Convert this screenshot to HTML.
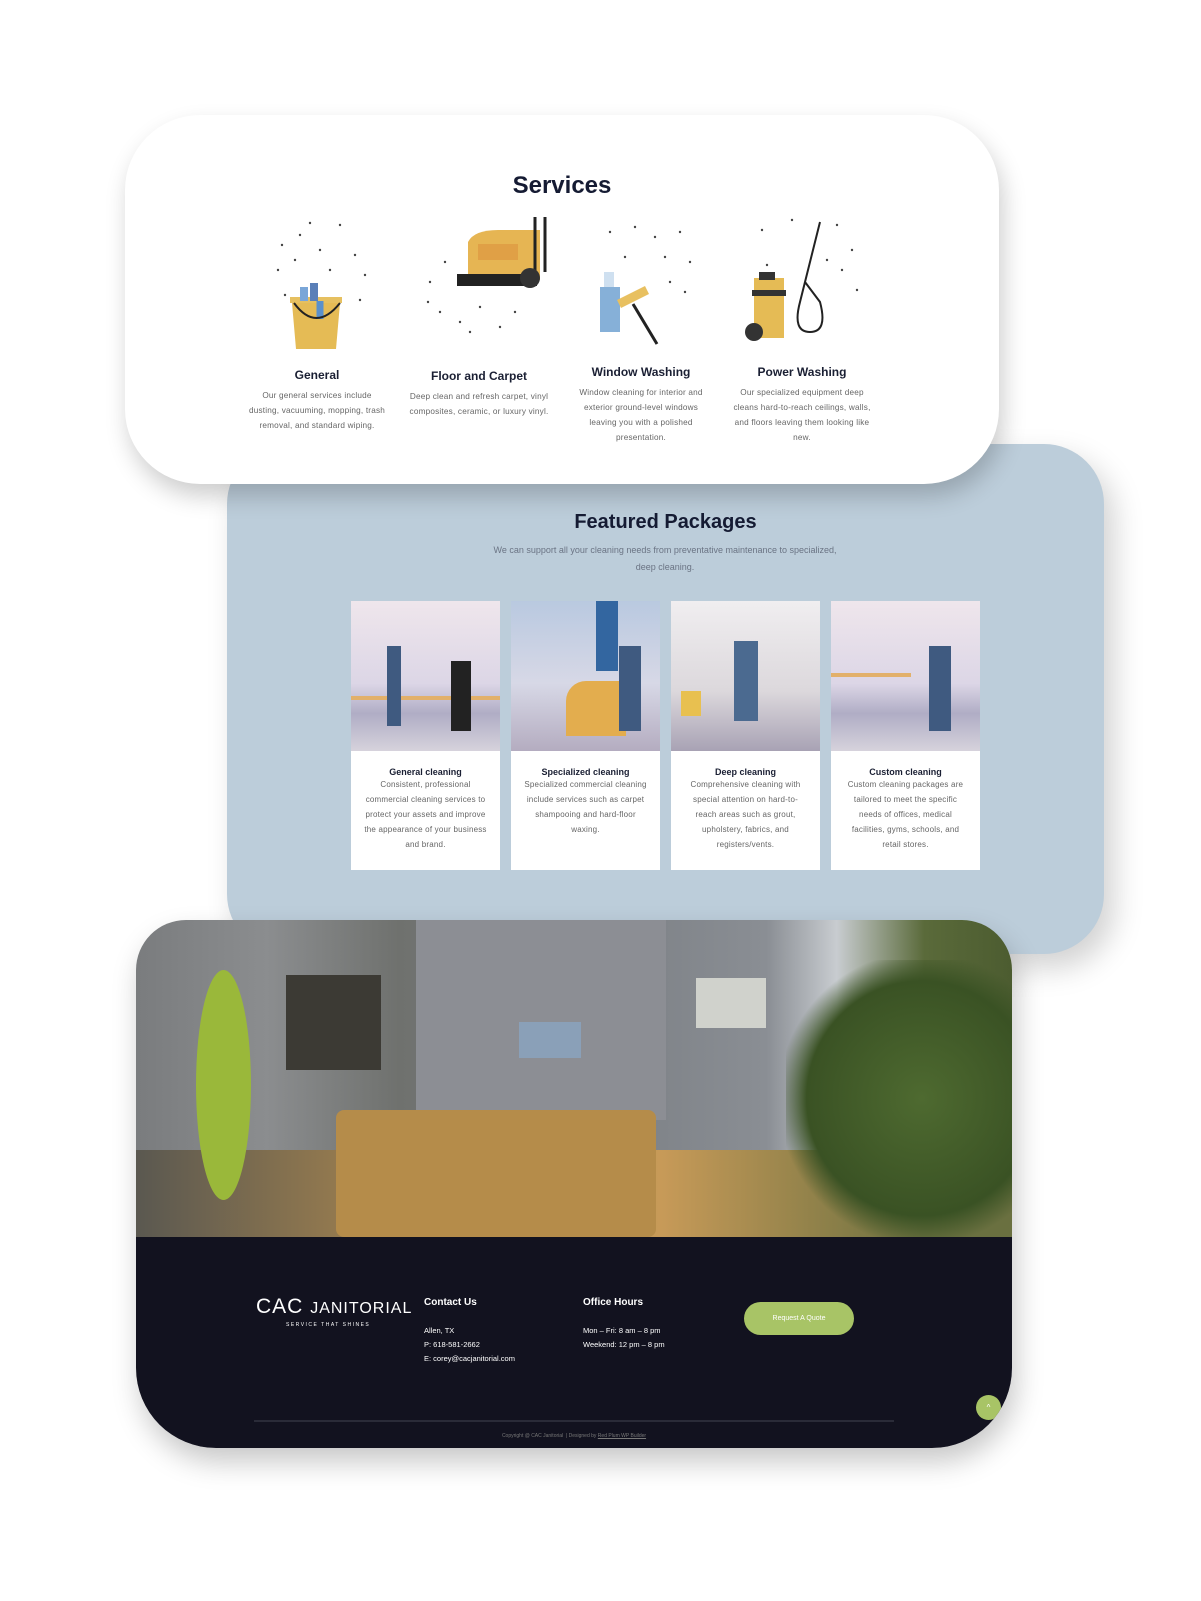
<!DOCTYPE html>
<html><head><meta charset="utf-8"><style>
*{margin:0;padding:0;box-sizing:border-box}
body{width:1201px;height:1601px;background:#fff;position:relative;overflow:hidden;font-family:"Liberation Sans",sans-serif;color:#1a1f33}
.abs{position:absolute}
.blue{left:227px;top:444px;width:877px;height:510px;background:#bccdda;border-radius:60px;box-shadow:10px 14px 30px rgba(0,0,0,.18)}
.white{left:125px;top:115px;width:874px;height:369px;background:#fff;border-radius:75px;box-shadow:4px 12px 24px rgba(0,0,0,.2)}
h2{font-weight:bold;text-align:center;color:#151b33}
.svc{position:absolute;width:140px;text-align:center}
.svc h4{font-size:12px;font-weight:bold;margin-bottom:6px}
.svc p{font-size:8.2px;line-height:15px;color:#666;letter-spacing:.2px}
.pk{position:absolute;top:601px;width:149px;height:269px;background:#fff}
.pk .im{height:150px;background:linear-gradient(#efe6ec 0%,#dcd6e6 55%,#b0adc5 75%,#d6d2dc 100%);position:relative;overflow:hidden}
.pk h5{font-size:9px;font-weight:bold;text-align:center;margin-top:16px}
.pk p{font-size:8px;line-height:15px;color:#666;text-align:center;padding:0 13px;letter-spacing:.2px}
.photo{left:136px;top:920px;width:876px;height:528px;border-radius:50px 50px 80px 80px;overflow:hidden;box-shadow:4px 14px 28px rgba(0,0,0,.22)}
.foot{position:absolute;left:0;top:317px;width:100%;height:211px;background:#12121f;color:#fff}
</style></head><body>
<div class="abs blue"></div>
<div class="abs white"></div>
<h2 class="abs" style="left:125px;width:874px;top:172px;font-size:24px">Services</h2>

<svg class="abs" style="left:270px;top:215px" width="110" height="135">
<g fill="#444"><circle cx="12" cy="30" r="1.2"/><circle cx="30" cy="20" r="1.2"/><circle cx="50" cy="35" r="1.2"/><circle cx="70" cy="10" r="1.2"/><circle cx="85" cy="40" r="1.2"/><circle cx="95" cy="60" r="1.2"/><circle cx="8" cy="55" r="1.2"/><circle cx="25" cy="45" r="1.2"/><circle cx="60" cy="55" r="1.2"/><circle cx="90" cy="85" r="1.2"/><circle cx="15" cy="80" r="1.2"/><circle cx="40" cy="8" r="1.2"/></g>
<rect x="20" y="82" width="52" height="6" fill="#e6c060"/><path d="M22 88h48l-4 46H26z" fill="#e5bb55"/>
<rect x="30" y="72" width="8" height="14" fill="#7aa6d8"/><rect x="40" y="68" width="8" height="18" fill="#5a7fb8"/><path d="M50 86v18" stroke="#5a90cc" stroke-width="7"/>
<path d="M24 88q22 30 46 0" fill="none" stroke="#222" stroke-width="2"/></svg>

<svg class="abs" style="left:420px;top:212px" width="135" height="130">
<g fill="#444"><circle cx="10" cy="70" r="1.2"/><circle cx="25" cy="50" r="1.2"/><circle cx="20" cy="100" r="1.2"/><circle cx="40" cy="110" r="1.2"/><circle cx="60" cy="95" r="1.2"/><circle cx="80" cy="115" r="1.2"/><circle cx="95" cy="100" r="1.2"/><circle cx="8" cy="90" r="1.2"/><circle cx="50" cy="120" r="1.2"/></g>
<path d="M48 30q6-12 30-12h42v50H48z" fill="#e6b553"/><rect x="58" y="32" width="40" height="16" fill="#e0a046"/>
<path d="M115 5v60M125 5v55" stroke="#222" stroke-width="3"/><rect x="37" y="62" width="80" height="12" fill="#222"/><circle cx="110" cy="66" r="10" fill="#333"/></svg>

<svg class="abs" style="left:595px;top:212px" width="110" height="135">
<g fill="#444"><circle cx="15" cy="20" r="1.2"/><circle cx="40" cy="15" r="1.2"/><circle cx="60" cy="25" r="1.2"/><circle cx="85" cy="20" r="1.2"/><circle cx="95" cy="50" r="1.2"/><circle cx="70" cy="45" r="1.2"/><circle cx="30" cy="45" r="1.2"/><circle cx="90" cy="80" r="1.2"/><circle cx="75" cy="70" r="1.2"/></g>
<rect x="5" y="75" width="20" height="45" fill="#86b0d8"/><rect x="9" y="60" width="10" height="15" fill="#cfe0f0"/>
<path d="M22 88l28-14 4 8-28 14z" fill="#e8c060"/><path d="M38 92l24 40" stroke="#222" stroke-width="3"/></svg>

<svg class="abs" style="left:742px;top:210px" width="125" height="135">
<g fill="#444"><circle cx="20" cy="20" r="1.2"/><circle cx="50" cy="10" r="1.2"/><circle cx="95" cy="15" r="1.2"/><circle cx="110" cy="40" r="1.2"/><circle cx="100" cy="60" r="1.2"/><circle cx="25" cy="55" r="1.2"/><circle cx="115" cy="80" r="1.2"/><circle cx="85" cy="50" r="1.2"/></g>
<path d="M78 12l-20 80q-8 30 10 30t10-30l-15-20" fill="none" stroke="#222" stroke-width="2"/>
<rect x="12" y="68" width="30" height="60" fill="#e5bb55"/><rect x="10" y="80" width="34" height="6" fill="#333"/><rect x="17" y="62" width="16" height="8" fill="#333"/><circle cx="12" cy="122" r="9" fill="#333"/></svg>

<div class="svc" style="left:247px;top:368px"><h4>General</h4><p>Our general services include dusting, vacuuming, mopping, trash removal, and standard wiping.</p></div>
<div class="svc" style="left:406px;top:369px;width:146px"><h4>Floor and Carpet</h4><p>Deep clean and refresh carpet, vinyl composites, ceramic, or luxury vinyl.</p></div>
<div class="svc" style="left:571px;top:365px"><h4>Window Washing</h4><p>Window cleaning for interior and exterior ground-level windows leaving you with a polished presentation.</p></div>
<div class="svc" style="left:732px;top:365px"><h4>Power Washing</h4><p>Our specialized equipment deep cleans hard-to-reach ceilings, walls, and floors leaving them looking like new.</p></div>

<h2 class="abs" style="left:227px;width:877px;top:511px;font-size:20px">Featured Packages</h2>
<p class="abs" style="left:485px;width:360px;top:542px;font-size:9px;line-height:17px;color:#6b7484;text-align:center">We can support all your cleaning needs from preventative maintenance to specialized, deep cleaning.</p>

<div class="pk" style="left:351px"><div class="im"><div class="abs" style="left:0;top:95px;width:149px;height:4px;background:#e2b06a"></div><div class="abs" style="left:36px;top:45px;width:14px;height:80px;background:#3f5a80"></div><div class="abs" style="left:100px;top:60px;width:20px;height:70px;background:#222"></div></div><h5>General cleaning</h5><p>Consistent, professional commercial cleaning services to protect your assets and improve the appearance of your business and brand.</p></div>
<div class="pk" style="left:511px"><div class="im" style="background:linear-gradient(#b9c9e0,#d7d8e6 55%,#b4acc0)"><div class="abs" style="left:85px;top:0;width:22px;height:70px;background:#3366a0"></div><div class="abs" style="left:55px;top:80px;width:60px;height:55px;background:#e3ad4e;border-radius:20px 4px 0 0"></div><div class="abs" style="left:108px;top:45px;width:22px;height:85px;background:#3f5a80"></div></div><h5>Specialized cleaning</h5><p>Specialized commercial cleaning include services such as carpet shampooing and hard-floor waxing.</p></div>
<div class="pk" style="left:671px"><div class="im" style="background:linear-gradient(#f0eef0,#dcd8dc 60%,#a8a2b4)"><div class="abs" style="left:63px;top:40px;width:24px;height:80px;background:#4b6a90"></div><div class="abs" style="left:10px;top:90px;width:20px;height:25px;background:#e8c050"></div></div><h5>Deep cleaning</h5><p>Comprehensive cleaning with special attention on hard-to-reach areas such as grout, upholstery, fabrics, and registers/vents.</p></div>
<div class="pk" style="left:831px"><div class="im"><div class="abs" style="left:0;top:72px;width:80px;height:4px;background:#e2b06a"></div><div class="abs" style="left:98px;top:45px;width:22px;height:85px;background:#3f5a80"></div></div><h5>Custom cleaning</h5><p>Custom cleaning packages are tailored to meet the specific needs of offices, medical facilities, gyms, schools, and retail stores.</p></div>

<div class="abs photo">
<div class="abs" style="left:0;top:0;width:876px;height:317px;background:linear-gradient(90deg,#7a7c7e 0%,#8b8d8f 15%,#6f716e 30%,#7d8186 55%,#8a8e94 72%,#c8ccd0 80%,#5a6a3a 90%,#4c5c30 100%)"></div>
<div class="abs" style="left:280px;top:0;width:250px;height:200px;background:#8c8e94"></div>
<div class="abs" style="left:0;top:230px;width:876px;height:87px;background:linear-gradient(90deg,#5a5850,#b08a4e 35%,#c79a58 60%,#6a7040 90%)"></div>
<div class="abs" style="left:200px;top:190px;width:320px;height:127px;background:#b58c4a;border-radius:8px"></div>
<div class="abs" style="left:60px;top:50px;width:55px;height:230px;background:#9ab83a;border-radius:50%"></div>
<div class="abs" style="left:150px;top:55px;width:95px;height:95px;background:#3c3a34"></div>
<div class="abs" style="left:383px;top:102px;width:62px;height:36px;background:#8aa0b8"></div>
<div class="abs" style="left:560px;top:58px;width:70px;height:50px;background:#d0d2cc"></div>
<div class="abs" style="left:650px;top:40px;width:226px;height:277px;background:radial-gradient(ellipse at 60% 50%,#4e6a30,#3a5224 60%,transparent 75%)"></div>
<div class="foot">
<div class="abs" style="left:120px;top:58px;font-size:21px;letter-spacing:1px">CAC <span style="font-size:16px">JANITORIAL</span></div>
<div class="abs" style="left:150px;top:85px;font-size:5px;letter-spacing:1.5px">SERVICE THAT SHINES</div>
<div class="abs" style="left:288px;top:60px;font-size:10px;font-weight:bold">Contact Us</div>
<div class="abs" style="left:288px;top:87px;font-size:7.5px;line-height:14px">Allen, TX<br>P: 618-581-2662<br>E: corey@cacjanitorial.com</div>
<div class="abs" style="left:447px;top:60px;font-size:10px;font-weight:bold">Office Hours</div>
<div class="abs" style="left:447px;top:87px;font-size:7.5px;line-height:14px">Mon – Fri: 8 am – 8 pm<br>Weekend: 12 pm – 8 pm</div>
<div class="abs" style="left:608px;top:65px;width:110px;height:33px;border-radius:17px;background:#a8c466;font-size:7px;text-align:center;line-height:33px">Request A Quote</div>
<div class="abs" style="left:840px;top:158px;width:25px;height:25px;border-radius:50%;background:#a8c466;font-size:8px;text-align:center;line-height:25px">^</div>
<div class="abs" style="left:118px;top:183px;width:640px;height:2px;background:#2a2b38"></div>
<div class="abs" style="left:0;width:876px;top:196px;font-size:5px;text-align:center;color:#777">Copyright @ CAC Janitorial &nbsp;| Designed by <u>Red Plum WP Builder</u></div>
</div>
</div>
</body></html>
